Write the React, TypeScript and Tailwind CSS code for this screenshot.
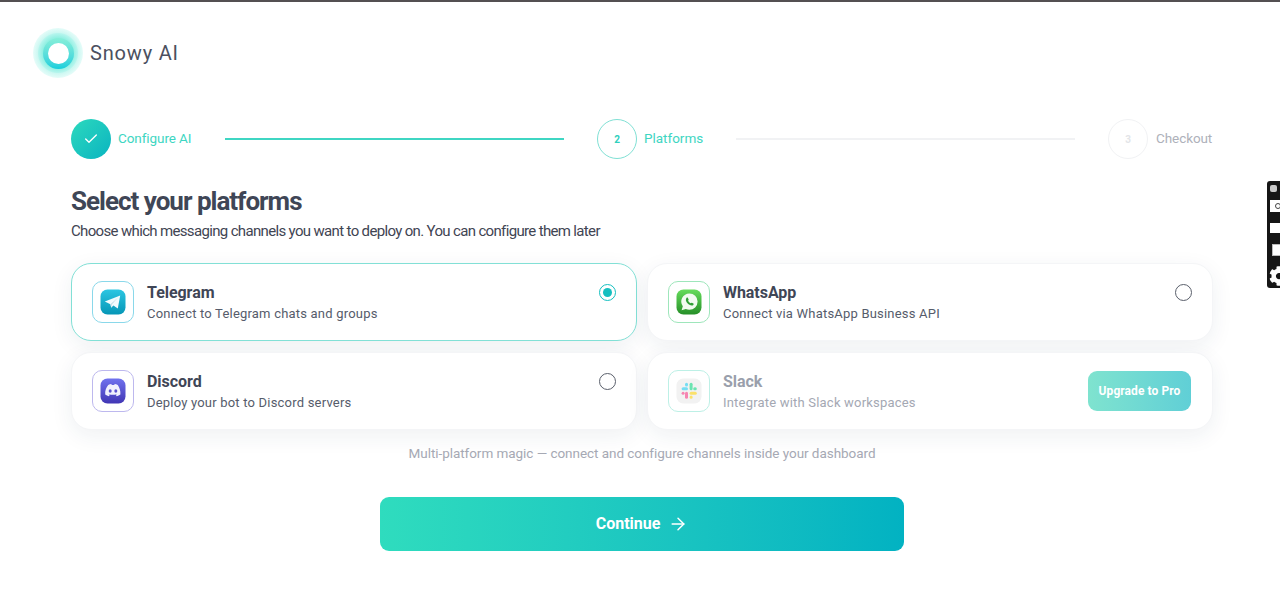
import { ArrowRight, Check } from "lucide-react";
import { FaCog } from "react-icons/fa";
import type { ReactNode } from "react";

function TelegramIcon() {
  return (
    <svg width="26" height="26" viewBox="0 0 26 26">
      <defs>
        <linearGradient id="tg" x1="0" y1="0" x2="0" y2="1">
          <stop offset="0" stopColor="#2cc6e2" />
          <stop offset="1" stopColor="#0596b6" />
        </linearGradient>
      </defs>
      <rect width="25" height="25" x="0.5" y="0.5" rx="7" fill="url(#tg)" />
      <path d="M4.800 12.600 20.200 6.400 17.800 19.400 13.400 16.400 11.200 18.800 10.400 15.200Z" fill="#f2fbfd" />
      <path d="M10.400 15.200 18 8.600 11.800 15.400 11.200 18.800Z" fill="#c2dde6" />
    </svg>
  );
}

function WhatsAppIcon() {
  return (
    <svg width="26" height="26" viewBox="0 0 26 26">
      <defs>
        <linearGradient id="wa" x1="0" y1="0" x2="0" y2="1">
          <stop offset="0" stopColor="#66dc5c" />
          <stop offset="1" stopColor="#268f28" />
        </linearGradient>
      </defs>
      <rect width="25" height="25" x="0.5" y="0.5" rx="7" fill="url(#wa)" />
      <path d="M13.400 4.400a8.200 8.200 0 0 1 0 16.400 8.300 8.300 0 0 1-3.600-.8l-4.200 1.200 1.200-3.900a8.200 8.200 0 0 1 6.600-12.900Z" fill="#f2fbf1" />
      <path d="M10.600 8.800c.5-.4 1-.4 1.200 0l.8 1.600c.1.3 0 .6-.5 1.300.5 1.100 1.400 2 2.600 2.600.5-.6.900-.8 1.200-.6l1.500.9c.4.2.3.9-.1 1.300-.9.9-2.200.9-3.900-.1-1.700-1-2.900-2.300-3.400-4-.3-1.100 0-2 .6-3Z" fill="#2f9e35" />
    </svg>
  );
}

function DiscordIcon() {
  return (
    <svg width="26" height="26" viewBox="0 0 26 26">
      <defs>
        <linearGradient id="dc" x1="0" y1="0" x2="0" y2="1">
          <stop offset="0" stopColor="#7072ee" />
          <stop offset="1" stopColor="#4136b4" />
        </linearGradient>
      </defs>
      <rect width="25" height="25" x="0.5" y="0.5" rx="7" fill="url(#dc)" />
      <path d="M8.200 7c1.100-.6 2.200-.8 3.100-.9l.5.9a10 10 0 0 1 2.400 0l.5-.9c.9.1 2 .3 3.100.9 1.900 2.800 2.800 5.900 2.600 9.400-1.100.9-2.400 1.500-3.700 1.800l-.9-1.400 1.400-.7-.3-.2a9.800 9.800 0 0 1-8.200 0l-.3.2 1.400.7-.9 1.400c-1.300-.3-2.600-.9-3.700-1.800-.2-3.500.7-6.600 3-9.400Z" fill="#f1f1fd" />
      <ellipse cx="10.200" cy="13" rx="1.500" ry="1.800" fill="#5a52d0" />
      <ellipse cx="15.800" cy="13" rx="1.500" ry="1.800" fill="#5a52d0" />
    </svg>
  );
}

function SlackIcon() {
  return (
    <svg width="26" height="26" viewBox="0 0 26 26">
      <rect width="25" height="25" x="0.5" y="0.5" rx="7" fill="#f0f0f0" />
      <rect x="5.600" y="9.200" width="6.400" height="3" rx="1.500" fill="#5fd8f2" />
      <rect x="9" y="4.800" width="3" height="3.800" rx="1.500" fill="#5fd8f2" />
      <rect x="13.600" y="4.800" width="3" height="7.400" rx="1.500" fill="#52e0a4" />
      <rect x="17.200" y="9.200" width="3.600" height="3" rx="1.500" fill="#52e0a4" />
      <rect x="5.600" y="13.800" width="3" height="3" rx="1.500" fill="#f570a4" />
      <rect x="9" y="13.800" width="3" height="7" rx="1.500" fill="#f570a4" />
      <rect x="13.600" y="13.800" width="7.200" height="3" rx="1.500" fill="#fbdc52" />
      <rect x="13.600" y="17.400" width="3" height="3.400" rx="1.500" fill="#fbdc52" />
    </svg>
  );
}

function Logo() {
  return (
    <div className="flex h-[50px] w-[50px] shrink-0 items-center justify-center rounded-full bg-[radial-gradient(circle_closest-side,#7eecdd_0%,#93f0e3_62%,#b5f5ed_78%,#cdf8f2_82%,#e6fcf9_100%)]">
      <div className="flex h-[31px] w-[31px] items-center justify-center rounded-full bg-gradient-to-b from-[#86efd9] to-[#10cfdc]">
        <div className="h-[21px] w-[21px] rounded-full bg-white" />
      </div>
    </div>
  );
}

function Card({
  icon,
  border,
  title,
  desc,
  selected,
  dim,
  right,
}: {
  icon: ReactNode;
  border: string;
  title: string;
  desc: string;
  selected?: boolean;
  dim?: boolean;
  right?: ReactNode;
}) {
  return (
    <div
      className={
        selected
          ? "relative flex h-[78px] items-center rounded-[20px] border border-[#82e0d6] bg-white pr-[20px] pl-[20px] shadow-[0_6px_22px_rgba(30,50,80,0.07)]"
          : "relative flex h-[78px] items-center rounded-[20px] border border-[#f4f5f7] bg-white pr-[20px] pl-[20px] shadow-[0_6px_22px_rgba(30,50,80,0.07)]"
      }
    >
      <div className={`flex h-[42px] w-[42px] shrink-0 items-center justify-center rounded-[10px] border bg-white ${border}`}>
        <div className={dim ? "opacity-85" : ""}>{icon}</div>
      </div>
      <div className="ml-[13px] flex flex-col pt-[2px]">
        <div className={`text-[16px] leading-[22px] font-bold tracking-[-0.05px] ${dim ? "text-[#9a9fac]" : "text-[#3f4656]"}`}>{title}</div>
        <div className={`text-[13px] leading-[20px] tracking-[0.2px] ${dim ? "text-[#a4a8b3]" : "text-[#565c6b]"}`}>{desc}</div>
      </div>
      {right}
    </div>
  );
}

function RadioOff() {
  return <div className="absolute top-[20px] right-[20px] h-[17px] w-[17px] rounded-full border-[1.5px] border-[#5a5f6b] bg-white" />;
}

function RadioOn() {
  return (
    <div className="absolute top-[20px] right-[20px] flex h-[17px] w-[17px] items-center justify-center rounded-full border-[1.5px] border-[#14bfc0] bg-white">
      <div className="h-[9px] w-[9px] rounded-full bg-[#14bfc0]" />
    </div>
  );
}

export default function App() {
  return (
    <div className="relative h-[609px] w-full overflow-hidden bg-white font-['Roboto',sans-serif]">
      <div className="h-[2px] bg-[#545052]" />

      <header className="flex items-center pt-[26px] pl-[33px]">
        <Logo />
        <span className="ml-[7px] text-[20px] leading-[50px] tracking-[0.82px] text-[#4b5060]">Snowy AI</span>
      </header>

      <main className="mx-[71px] mt-[41px] w-[1142px]">
        <div className="flex h-[40px] items-center">
          <div className="flex h-[40px] w-[40px] items-center justify-center rounded-full bg-gradient-to-br from-[#2bd9bd] to-[#08b4c0]">
            <Check size={16} strokeWidth={2} className="text-white" />
          </div>
          <span className="ml-[7px] w-[107px] pb-[2px] text-[13.5px] tracking-[-0.08px] text-[#3ed6c2]">Configure AI</span>
          <div className="h-[2px] w-[339px] bg-[#3fd6c3]" />
          <div className="ml-[33px] flex h-[40px] w-[40px] items-center justify-center rounded-full border border-[#7fe0d4] text-[10px] font-bold text-[#2fd0bd]">2</div>
          <span className="ml-[7px] w-[92px] pb-[2px] text-[13.5px] tracking-[-0.02px] text-[#3ed6c2]">Platforms</span>
          <div className="h-[2px] w-[339px] bg-[#f1f2f4]" />
          <div className="ml-[33px] flex h-[40px] w-[40px] items-center justify-center rounded-full border border-[#f1f2f4] text-[10px] font-bold text-[#e3e5e8]">3</div>
          <span className="ml-[8px] pb-[2px] text-[13.5px] tracking-[-0.08px] text-[#aeb1ba]">Checkout</span>
        </div>

        <h1 className="mt-[26px] text-[26px] leading-[32px] font-bold tracking-[-1px] text-[#3f4656]">Select your platforms</h1>
        <p className="mt-[2px] text-[15px] leading-[24px] tracking-[-0.66px] text-[#3f4553]">Choose which messaging channels you want to deploy on. You can configure them later</p>

        <div className="mt-[20px] grid grid-cols-2 gap-x-[10px] gap-y-[11px]">
          <Card icon={<TelegramIcon />} border="border-[#8ad8ea]" title="Telegram" desc="Connect to Telegram chats and groups" selected right={<RadioOn />} />
          <Card icon={<WhatsAppIcon />} border="border-[#9ee6bb]" title="WhatsApp" desc="Connect via WhatsApp Business API" right={<RadioOff />} />
          <Card icon={<DiscordIcon />} border="border-[#bdb8ee]" title="Discord" desc="Deploy your bot to Discord servers" right={<RadioOff />} />
          <Card
            icon={<SlackIcon />}
            border="border-[#bdf0e6]"
            title="Slack"
            desc="Integrate with Slack workspaces"
            dim
            right={
              <button className="absolute top-[18px] right-[21px] flex h-[40px] w-[103px] items-center justify-center rounded-[9px] bg-gradient-to-r from-[#7fe3cf] to-[#60cfd6] text-[12px] font-bold tracking-[0.08px] text-white">
                Upgrade to Pro
              </button>
            }
          />
        </div>

        <p className="mt-[13px] text-center text-[13.5px] leading-[20px] tracking-[-0.05px] text-[#a6a9b4]">Multi-platform magic — connect and configure channels inside your dashboard</p>

        <button className="mx-auto mt-[34px] flex h-[54px] w-[524px] items-center justify-center gap-[8px] rounded-[9px] bg-gradient-to-r from-[#2fdcbe] to-[#02b2c2] text-[16px] font-bold text-white">
          Continue
          <ArrowRight size={20} strokeWidth={1.75} />
        </button>
      </main>

      <div className="absolute top-[181px] right-0 flex h-[107px] w-[13px] flex-col items-start overflow-hidden rounded-l-[3px] bg-[#161616] pt-[4px]">
        <div className="ml-[3px] h-[7px] w-[7px] rounded-[2px] bg-[#c9c9c9]" />
        <div className="mt-[8px] ml-[3px] flex h-[12px] w-[14px] shrink-0 items-center justify-start bg-white pl-[5px]">
          <div className="h-[6px] w-[6px] rounded-full border border-[#444]" />
        </div>
        <div className="mt-[11px] ml-[3px] h-[10px] w-[14px] shrink-0 bg-white" />
        <div className="mt-[11px] ml-[5px] h-[12px] w-[14px] shrink-0 border border-[#bbb] bg-white" />
        <FaCog size={20} className="mt-[10px] ml-[2px] shrink-0 text-white" />
      </div>
    </div>
  );
}
